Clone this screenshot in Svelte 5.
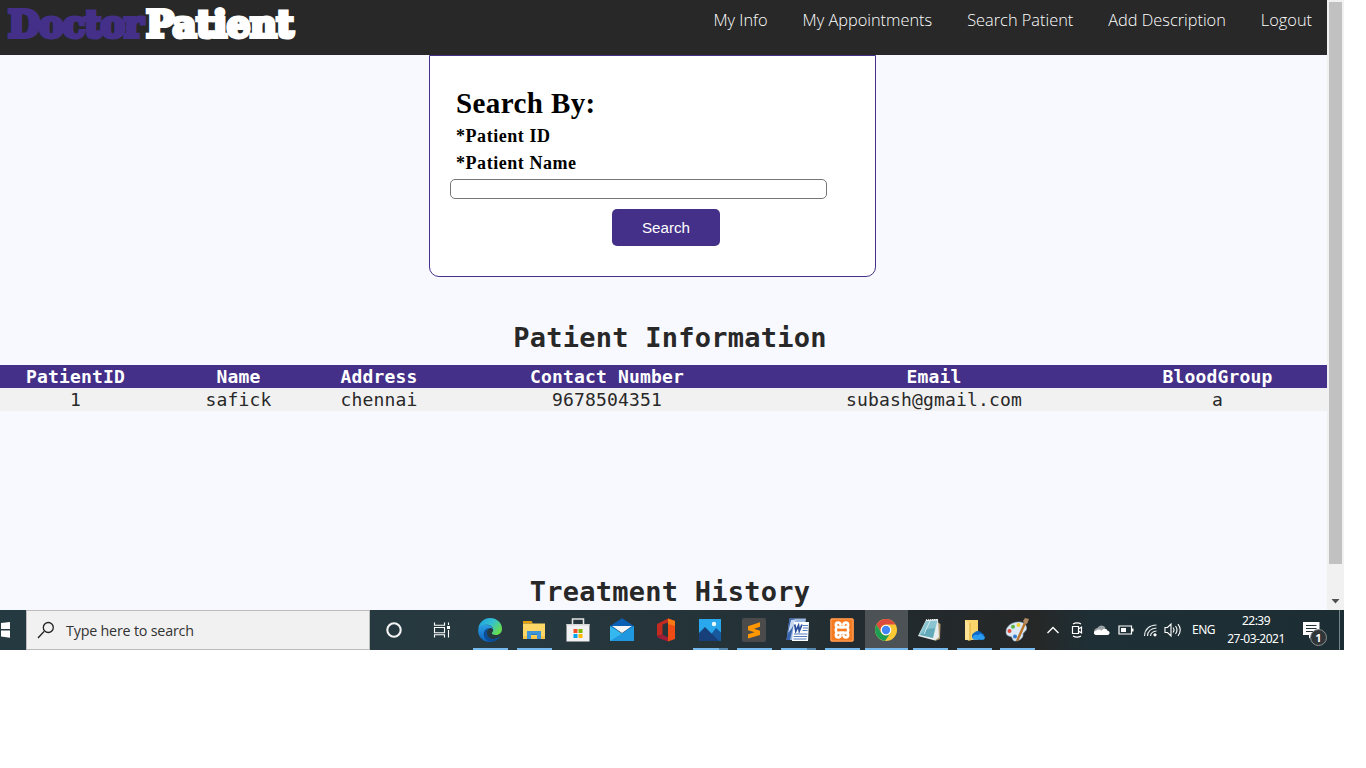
<script>
  const links = ['My Info', 'My Appointments', 'Search Patient', 'Add Description', 'Logout'];
  const columns = ['PatientID', 'Name', 'Address', 'Contact Number', 'Email', 'BloodGroup'];
  const patient = ['1', 'safick', 'chennai', '9678504351', 'subash@gmail.com', 'a'];
  const apps = [
    { name: 'edge', open: true },
    { name: 'explorer', open: true },
    { name: 'store' },
    { name: 'mail' },
    { name: 'office' },
    { name: 'photos', open: true, stacked: true },
    { name: 'sublime', open: true },
    { name: 'word', open: true, stacked: true },
    { name: 'xampp', open: true },
    { name: 'chrome', open: true, active: true },
    { name: 'notepad', open: true },
    { name: 'onedrive', open: true },
    { name: 'paint', open: true }
  ];
</script>

{#snippet glyph(name)}
  <svg class="glyph" viewBox="0 0 24 24" width="24" height="24">
    {#if name === 'edge'}
      <defs>
        <linearGradient id="eg1" x1="0" y1="0" x2="1" y2=".6"><stop offset="0" stop-color="#1b9de2" /><stop offset=".55" stop-color="#35c1d0" /><stop offset="1" stop-color="#66dd50" /></linearGradient>
        <linearGradient id="eg2" x1="0" y1="0" x2="0" y2="1"><stop offset="0" stop-color="#2b9fe4" /><stop offset="1" stop-color="#0c62bd" /></linearGradient>
      </defs>
      <path fill="url(#eg1)" d="M.3 10.5C1.2 4.300 6 0 12 0c7 0 12 5 12 10.700 0 4-3 6.300-6.200 6.300-2.600 0-4-.9-4-1.700 0-.8 1.400-1.300 1.400-3.300 0-2.700-2.700-5.200-6.600-5.200C4.500 6.800 1.400 8.700.3 10.500z" />
      <path fill="url(#eg2)" d="M.2 11.500C.7 8.500 4 6.700 8 6.800c3.900 0 7.200 2.300 7.200 5.200-.8-1.600-2.300-2.200-3.600-1.800-2.500.8-3.600 4-2.400 7.100 1.500 3.900 6.300 5.900 12.800 1.300C19.600 22 16 24 12 24 5 24-.5 18.500.2 11.500z" />
      <path fill="#0c4c96" d="M11.600 10.200c-3.500-.4-6.200 2.800-5.700 6.700.5 3.900 3.500 6.700 7.600 7 3.500-.3 6.500-2.200 8.500-5.300-6.500 4.600-11.300 2.600-12.800-1.300-1.200-3.100-.1-6.300 2.400-7.100z" />
    {:else if name === 'explorer'}
      <path fill="#e3a008" d="M1 3h8.500l1.500 2.500H1z" /><path fill="#ffd766" d="M1 5.500h22V21H1z" /><path fill="#f6c64a" d="M1 18h22v3H1z" />
      <path fill="#3d95d8" d="M5 21v-8h14v8h-4v-4H9v4z" /><path fill="#2479bd" d="M9 16h6v1H9z" />
    {:else if name === 'store'}
      <path fill="none" stroke="#e5e5e5" stroke-width="1.500" d="M6.500 8V.9h11V8" /><path fill="#f2f2f2" d="M.5 6h23v17.500H.5z" /><path fill="#d8d8d8" d="M.5 6h23v1.500H.5z" />
      <path fill="#f25022" d="M7.500 11h4v4h-4z" /><path fill="#7fba00" d="M12.500 11h4v4h-4z" /><path fill="#00a4ef" d="M7.500 16h4v4h-4z" /><path fill="#ffb900" d="M12.500 16h4v4h-4z" />
    {:else if name === 'mail'}
      <path fill="#0a5fb4" d="M0 8 12 .3 24 8l-3 5H3z" /><path fill="#35b7f0" d="M0 8l12 7.500L24 8v15H0z" /><path fill="#1687d6" d="M0 23 24 8v15z" opacity=".65" /><path fill="#f5f5f5" d="M2 8h20l-10 7z" />
    {:else if name === 'office'}
      <path fill="#c42b20" d="M3 6 14 .5v4L8.500 6.500v10L3 18z" /><path fill="#ef4b14" d="m14 .5 7 2.500v18l-7 2.500z" /><path fill="#f57a13" d="m14 .5 7 2.500v5l-7-2z" /><path fill="#9c1d38" d="m3 18 5.500-1.500L14 19.500v4L4.500 20z" />
    {:else if name === 'photos'}
      <path fill="#29a8ee" d="M1 1h22v22H1z" /><path fill="#17599f" d="m11 19 7-9 5 4.500V23H11z" /><path fill="#173f7a" d="m1 15 6-6 14 14H1z" /><circle cx="16" cy="6" r="2.200" fill="#eefaff" />
    {:else if name === 'sublime'}
      <rect width="24" height="24" rx="2" fill="#4b4b4b" /><path fill="#ff9800" d="m6 8.200 12-3.900v4.500L12 10.700l6 2v4.200L6 20.500v-4.200l6.500-2.100L6 12.300z" />
    {:else if name === 'word'}
      <path fill="#9db9e3" d="M3.500.5H20L17 22H.5z" /><path fill="#3a64ad" d="M3.500.5H9L4 22H.5z" /><path fill="#c9d9f1" d="m5 2 5-.5L6 10l-4 5z" />
      <path fill="#fff" d="M8 4h15L22 23H6z" /><path fill="none" stroke="#2b4f9c" stroke-width="1.800" d="m8.800 6.500 1 6.500 2.700-5.500.8 5.500 2.700-6.500" /><path stroke="#547bbd" d="M17 7.500h5M17 10h5M16.500 12.500h5M8 16h13.500M7.700 18.500h13.500M7.500 21h13" />
    {:else if name === 'xampp'}
      <rect x=".2" y=".2" width="23.600" height="23.600" rx="2" fill="#f47b22" /><path fill="none" stroke="#ffa45e" d="M1 1h22v22H1z" />
      <path fill="none" stroke="#fff" stroke-width="2.700" stroke-linejoin="round" d="M12 9.200H8.200a2.300 2.300 0 1 1 2.300-2.300M12 9.200h3.800a2.300 2.300 0 1 0-2.300-2.300M12 14.800H8.200a2.300 2.300 0 1 0 2.300 2.300M12 14.800h3.800a2.300 2.300 0 1 1-2.300 2.300M6.500 9q-1.500 3 0 6M17.500 9q1.500 3 0 6" />
      <path stroke="#fff" stroke-width="2" d="M10.500 6.500v3h3v-3M10.500 17.500v-3h3v3" fill="none" />
    {:else if name === 'chrome'}
      <circle cx="12" cy="12" r="11" fill="#fcc934" /><path fill="#dd4b3e" d="M2.470 6.500A11 11 0 0 1 21.500 6.500H12a5.500 5.500 0 0 0-4.800 8.200z" /><path fill="#1e9e55" d="M2.470 6.500a11 11 0 0 0 8.500 16.400L16.700 14.800A5.500 5.500 0 0 1 7.200 14.700z" /><circle cx="12" cy="12" r="5.300" fill="#fff" /><circle cx="12" cy="12" r="4.200" fill="#4285f4" />
    {:else if name === 'notepad'}
      <path fill="#b39b70" d="m19 4 3.500 2-.5 15-5 2z" /><path fill="#e8eded" d="m8 2 12-1 1 18-4 3.500L0 18z" /><path fill="#8bc5d2" d="m8 3 11.500-.5L15 20 1 16.800z" /><path fill="#4798aa" d="m8.500 11 8.500-1-2 10-13-3z" opacity=".6" /><path stroke="#f4f4f4" stroke-width="1.300" stroke-dasharray="1 1" d="M8 2 20 1.500" /><path stroke="#cfe8ed" stroke-width="1" d="M12 3 6 16" />
    {:else if name === 'onedrive'}
      <path fill="#f9d56c" d="M3 2h13v20H3z" /><path fill="#ffe394" d="m3 2 4.500 3v18L3 21z" /><path fill="#dcab37" d="M7.500 5h1v18h-1z" /><path fill="#0f68c8" d="M12 21.500a3.800 3.800 0 0 1 .5-7 4.800 4.800 0 0 1 7.500.8 3.500 3.500 0 0 1 .5 6.500z" /><path fill="#2a9df0" d="M11 21.500c-1.500-3.500 2.500-6 5-4.200 1.500-2 5-1.300 5 .7 2.500 0 2.500 3.700 0 3.700z" />
    {:else if name === 'paint'}
      <path fill="#dbe9f5" stroke="#8ea8bf" stroke-width=".6" d="M1 14C1 8 7 4 14 4c5 0 8 3 7.500 7-.5 3-4 3-3.500 6 .3 3-4 6.500-8.500 6C7 22.500 8 19 5.500 18.500 3 18 1 17 1 14z" /><circle cx="4.500" cy="13" r="2" fill="#de4a3b" /><circle cx="8" cy="8.700" r="2" fill="#59b445" /><circle cx="13.500" cy="7" r="2" fill="#f0cf37" /><circle cx="10" cy="18.500" r="2" fill="#3579ca" />
      <path stroke="#b8742a" stroke-width="2.400" stroke-linecap="round" d="m12.500 22 7.500-17" /><path fill="#b08a62" d="m18 3 2-3 4 1-1.500 4-2 1.500z" />
    {/if}
  </svg>
{/snippet}

<div class="screen">
  <div class="browser">
    <main class="page">
      <header>
        <div class="logo"><span class="first">Doctor</span><span class="second">Patient</span></div>
        <nav>
          {#each links as link}<a href="#top">{link}</a>{/each}
        </nav>
      </header>
      <form class="search-card">
        <h1>Search By:</h1>
        <h3>*Patient ID</h3>
        <h3>*Patient Name</h3>
        <input type="text" />
        <button type="button">Search</button>
      </form>
      <h2>Patient Information</h2>
      <div class="table">
        <div class="row head">{#each columns as c}<span>{c}</span>{/each}</div>
        <div class="row">{#each patient as p}<span>{p}</span>{/each}</div>
      </div>
      <h2 class="history">Treatment History</h2>
    </main>
    <div class="scrollbar">
      <div class="thumb"></div>
      <svg width="9" height="5" viewBox="0 0 9 5"><path fill="#505050" d="M.5 0h8l-4 4.500z" /></svg>
    </div>
  </div>

  <footer class="taskbar">
    <div class="start">
      <svg width="11" height="18" viewBox="0 0 11 18"><path fill="#fff" d="M1 2l9-1v7H1zM1 9.500h9v7.300l-9-1.200z" /></svg>
    </div>
    <div class="finder">
      <svg width="18" height="18" viewBox="0 0 18 18"><path fill="none" stroke="#222" stroke-width="1.300" d="M1 17l6-6.500M16.300 6.500a5 5 0 1 1-10 0 5 5 0 0 1 10 0z" /></svg>
      <span>Type here to search</span>
    </div>
    <div class="tool"><svg width="18" height="18" viewBox="0 0 18 18"><circle cx="9" cy="9" r="6.700" fill="none" stroke="#f4f4f4" stroke-width="2.100" /></svg></div>
    <div class="tool">
      <svg width="18" height="16" viewBox="0 0 18 16"><path fill="none" stroke="#fff" stroke-width="1.100" d="M1.500.5v2.700h10V.5M1.500 5.500h10v5.200h-10zM1.500 15.500v-2.700h10v2.700M15.500.5V3M15.500 8v7.500" /><path fill="#fff" d="M14 4h3v3h-3z" /></svg>
    </div>
    <div class="apps">
      {#each apps as app}
        <div class="app" class:open={app.open} class:active={app.active} class:stacked={app.stacked}>{@render glyph(app.name)}</div>
      {/each}
    </div>
    <div class="tray">
      <svg width="14" height="16" viewBox="0 0 14 16"><path fill="none" stroke="#fff" stroke-width="1.400" d="m1.500 11 5.500-5.500 5.500 5.500" /></svg>
      <svg width="12" height="16" viewBox="0 0 12 16"><path fill="none" stroke="#fff" stroke-width="1.200" d="M2 2q4-2.300 8 0M2 14q4 2.300 8 0M1.500 4.500h6v7h-6zM7.500 7l3-2v6l-3-2" /></svg>
      <svg width="17" height="16" viewBox="0 0 17 16"><path fill="#9ba2a5" d="M1 10c0-3 2-4 3.500-4C6 2.500 11 2.500 12.500 6L9 11z" /><path fill="#fff" d="M3 13c-3-.5-2.500-4 0-4.200C5 7 7 7.500 8.500 8.700 10 6 14 6 14.500 8.700c3 .5 2.500 4 0 4.300z" /></svg>
      <svg width="16" height="16" viewBox="0 0 16 16"><path fill="none" stroke="#fff" stroke-width="1.200" d="M1 4h12.500v8H1z" /><path fill="#fff" d="M3 6h5v4H3zM14 6.500h1.500v3H14z" /></svg>
      <svg width="15" height="16" viewBox="0 0 15 16"><path fill="none" stroke="#e5eaec" stroke-width="1.200" d="M1.500 14Q2 3.500 13.500 3M4.500 14Q5 6.500 13.500 6M7.500 14Q8 9.500 13.500 9" /><circle cx="12" cy="12.800" r="1.600" fill="#fff" /></svg>
      <svg width="18" height="16" viewBox="0 0 18 16"><path fill="none" stroke="#fff" stroke-width="1.100" d="M1 5.500h2.500l3.500-3.500v12l-3.500-3.500H1zM9 5.500q2 2.500 0 5M11.500 4q3 4 0 8M14 2.200q4.500 5.800 0 11.600" /></svg>
    </div>
    <span class="lang">ENG</span>
    <div class="clock"><span>22:39</span><span>27-03-2021</span></div>
    <div class="notice">
      <svg width="17" height="17" viewBox="0 0 17 17"><path fill="#fff" d="M0 0h16.500v13H10l-4 3.500V13H0z" /><path stroke="#26353a" stroke-width="1.100" d="M3 3.500h10.500M3 6.500h10.500M3 9.500h7" /></svg>
      <span class="badge">1</span>
    </div>
    <div class="peek"></div>
  </footer>
</div>

<style>
  :global(body) { margin: 0; background: #fff; overflow: hidden; }
  .screen { width: 1344px; height: 650px; overflow: hidden; }
  .browser { display: flex; height: 610px; }
  .page { width: 1327px; height: 610px; overflow: hidden; background: #f8f9ff; }
  header { display: flex; justify-content: space-between; height: 55px; background: #282828; }
  .logo { display: flex; padding-left: 8px; font: bold 37px/49px "DejaVu Serif", serif; white-space: nowrap; }
  .first, .second { -webkit-text-stroke: 4px; }
  .first { width: 138px; color: #443088; letter-spacing: -1.000px; }
  .second { color: #fff; letter-spacing: -.300px; }
  nav { display: flex; gap: 35px; padding-right: 15px; font: 350 16.350px/40px "Open Sans", sans-serif; }
  nav a { color: #fff; text-decoration: none; white-space: nowrap; }
  .search-card { box-sizing: border-box; width: 447px; height: 222px; margin-left: 429px; padding: 29px 20px 0; background: #fff; border: 1px solid #443088; border-radius: 0 0 10px 10px; font-family: "Liberation Serif", serif; }
  h1, h3 { margin: 0 0 0 6px; color: #000; font-weight: bold; }
  h1 { font-size: 29px; line-height: 36px; letter-spacing: .4px; }
  h3 { font-size: 18px; line-height: 27px; letter-spacing: .55px; }
  .search-card h1 { margin-bottom: 2px; }
  .search-card input { display: block; box-sizing: border-box; width: 377px; height: 20px; margin: 2px 0 10px; padding: 0; border: 1px solid #767676; border-radius: 5px; background: #fff; }
  .search-card button { display: block; width: 108px; height: 37px; margin-left: 162px; padding: 0; border: 0; border-radius: 5px; background: #443088; color: #fff; font: 15.200px "Liberation Sans", sans-serif; }
  h2 { margin: 43px 0 0 13px; color: #282828; text-align: center; font: bold 27px/36px "DejaVu Sans Mono", monospace; letter-spacing: .25px; }
  .table { margin-top: 9px; overflow: hidden; }
  .row { display: grid; grid-template-columns: 151px 175px 106px 350px 304px 263px; width: 1349px; height: 23px; background: #f1f1f1; color: #282828; font: 18px/23px "DejaVu Sans Mono", monospace; letter-spacing: .160px; text-align: center; }
  .head { background: #443088; color: #fff; font-weight: bold; }
  .history { margin-top: 163px; }
  .scrollbar { display: flex; flex-direction: column; align-items: center; justify-content: space-between; box-sizing: border-box; width: 17px; padding: 2px 0 6px; background: #f1f1f1; }
  .thumb { width: 13px; height: 562px; background: #c1c1c1; }
  .taskbar { display: flex; height: 40px; background: linear-gradient(90deg, #253941 0, #27393f 500px, #243237 750px, #222a2e 900px, #262727 1035px, #1e2f35 1090px, #1c2d33 1344px); color: #fff; font-family: "Noto Sans", sans-serif; }
  .start { display: flex; align-items: center; width: 26px; }
  .finder { display: flex; align-items: center; gap: 11px; box-sizing: border-box; width: 344px; padding-left: 10px; border: 1px solid #bcbcbc; background: #f1f1f1; color: #333; font: 14.300px "Open Sans", sans-serif; letter-spacing: -.2px; }
  .tool { display: flex; align-items: center; justify-content: center; width: 48px; }
  .apps { display: flex; padding-left: 2px; width: 572px; }
  .app { display: flex; flex: none; position: relative; align-items: center; justify-content: center; width: 44px; }
  .app.open::after { content: ''; position: absolute; left: 5px; right: 4px; bottom: 0; height: 2px; background: #76b9ed; }
  .app.stacked::after { background: linear-gradient(90deg, #76b9ed 26px, #5587ad 26px); }
  .app.active { background: linear-gradient(#4d5256, #4d5256) 1px 0 / 43px 100% no-repeat; }
  .app.active::after { left: 1px; right: 0; }
  .app:last-child { left: -1px; }
  .tray { display: grid; grid-template-columns: 19px 24px 24px 25px 24px 22px; align-items: center; justify-items: center; width: 138px; margin-left: 6px; }
  .tray svg:first-child { justify-self: start; }
  .lang { margin-left: 8px; width: 24px; font-size: 12px; line-height: 40px; letter-spacing: -.5px; }
  .clock { display: flex; flex-direction: column; width: 60px; margin-left: 10px; padding-top: 2px; text-align: center; font-size: 12px; line-height: 18px; letter-spacing: -.500px; }
  .notice { position: relative; width: 36px; margin-left: 17px; padding-top: 12px; }
  .badge { position: absolute; left: 7px; top: 19px; width: 15px; height: 15px; border: 1px solid #8a8f91; border-radius: 50%; background: #303538; text-align: center; font: bold 11px/15px "Open Sans", sans-serif; }
  .peek { width: 1px; background: #74868c; }
  svg { display: block; flex: none; }
</style>
